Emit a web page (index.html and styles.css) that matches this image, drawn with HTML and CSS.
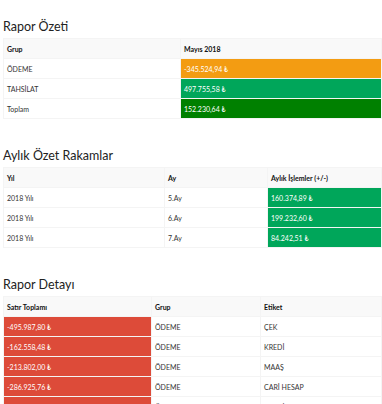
FILE: index.html
```html
<!DOCTYPE html>
<html lang="tr">
<head>
    <meta charset="UTF-8">
    <title>Rapor</title>
    <link rel="stylesheet" href="styles.css">
</head>
<body>
    <div class="section">
        <h3 class="section-title">Rapor Özeti</h3>
        <table class="report">
            <tr><th class="w-group">Grup</th><th>Mayıs 2018</th></tr>
            <tr><td>ÖDEME</td><td class="bg-orange">-345.524,94 ₺</td></tr>
            <tr><td>TAHSİLAT</td><td class="bg-green">497.755,58 ₺</td></tr>
            <tr><td>Toplam</td><td class="bg-dark-green">152.230,64 ₺</td></tr>
        </table>
    </div>

    <div class="section">
        <h3 class="section-title">Aylık Özet Rakamlar</h3>
        <table class="report">
            <tr><th class="w-year">Yıl</th><th class="w-month">Ay</th><th>Aylık İşlemler (+/-)</th></tr>
            <tr><td>2018 Yılı</td><td>5.Ay</td><td class="bg-green">160.374,89 ₺</td></tr>
            <tr><td>2018 Yılı</td><td>6.Ay</td><td class="bg-green">199.232,60 ₺</td></tr>
            <tr><td>2018 Yılı</td><td>7.Ay</td><td class="bg-green">84.242,51 ₺</td></tr>
        </table>
    </div>

    <div class="section">
        <h3 class="section-title">Rapor Detayı</h3>
        <table class="report">
            <tr><th class="w-total">Satır Toplamı</th><th class="w-detail-group">Grup</th><th>Etiket</th></tr>
            <tr><td class="bg-red">-495.987,80 ₺</td><td>ÖDEME</td><td>ÇEK</td></tr>
            <tr><td class="bg-red">-162.558,48 ₺</td><td>ÖDEME</td><td>KREDİ</td></tr>
            <tr><td class="bg-red">-213.802,00 ₺</td><td>ÖDEME</td><td>MAAŞ</td></tr>
            <tr><td class="bg-red">-286.925,76 ₺</td><td>ÖDEME</td><td>CARİ HESAP</td></tr>
            <tr><td class="bg-red">-49.322,08 ₺</td><td>ÖDEME</td><td>KREDİ KARTI</td></tr>
        </table>
    </div>
</body>
</html>
```

FILE: styles.css
```css
* {
    box-sizing: border-box;
}

body {
    margin: 0;
    padding: 19px 0 0 3px;
    font-family: 'Lato', 'DejaVu Sans', sans-serif;
    color: #333;
    background: #fff;
    overflow: hidden;
}

.section {
    margin-bottom: 29px;
}

.section-title {
    font-size: 12.5px;
    font-weight: 400;
    line-height: 16px;
    margin: 0 0 3px 0;
    color: #222;
}

.report {
    width: 379px;
    border-collapse: collapse;
    table-layout: fixed;
    font-size: 7px;
}

.report th,
.report td {
    height: 20px;
    padding: 0 3px;
    text-align: left;
    border: 1px solid #f4f4f4;
}

.report th {
    background: #f9f9f9;
    font-weight: 700;
    color: #111;
}

.w-group { width: 177px; }
.w-year { width: 161px; }
.w-month { width: 103px; }
.w-total { width: 148px; }
.w-detail-group { width: 109px; }

.bg-orange,
.bg-green,
.bg-dark-green,
.bg-red {
    color: #fff;
    border-color: rgba(255, 255, 255, 0.35);
}

.bg-orange { background: #f39c12; }
.bg-green { background: #00a65a; }
.bg-dark-green { background: #008000; }
.bg-red { background: #dd4b39; }
```
